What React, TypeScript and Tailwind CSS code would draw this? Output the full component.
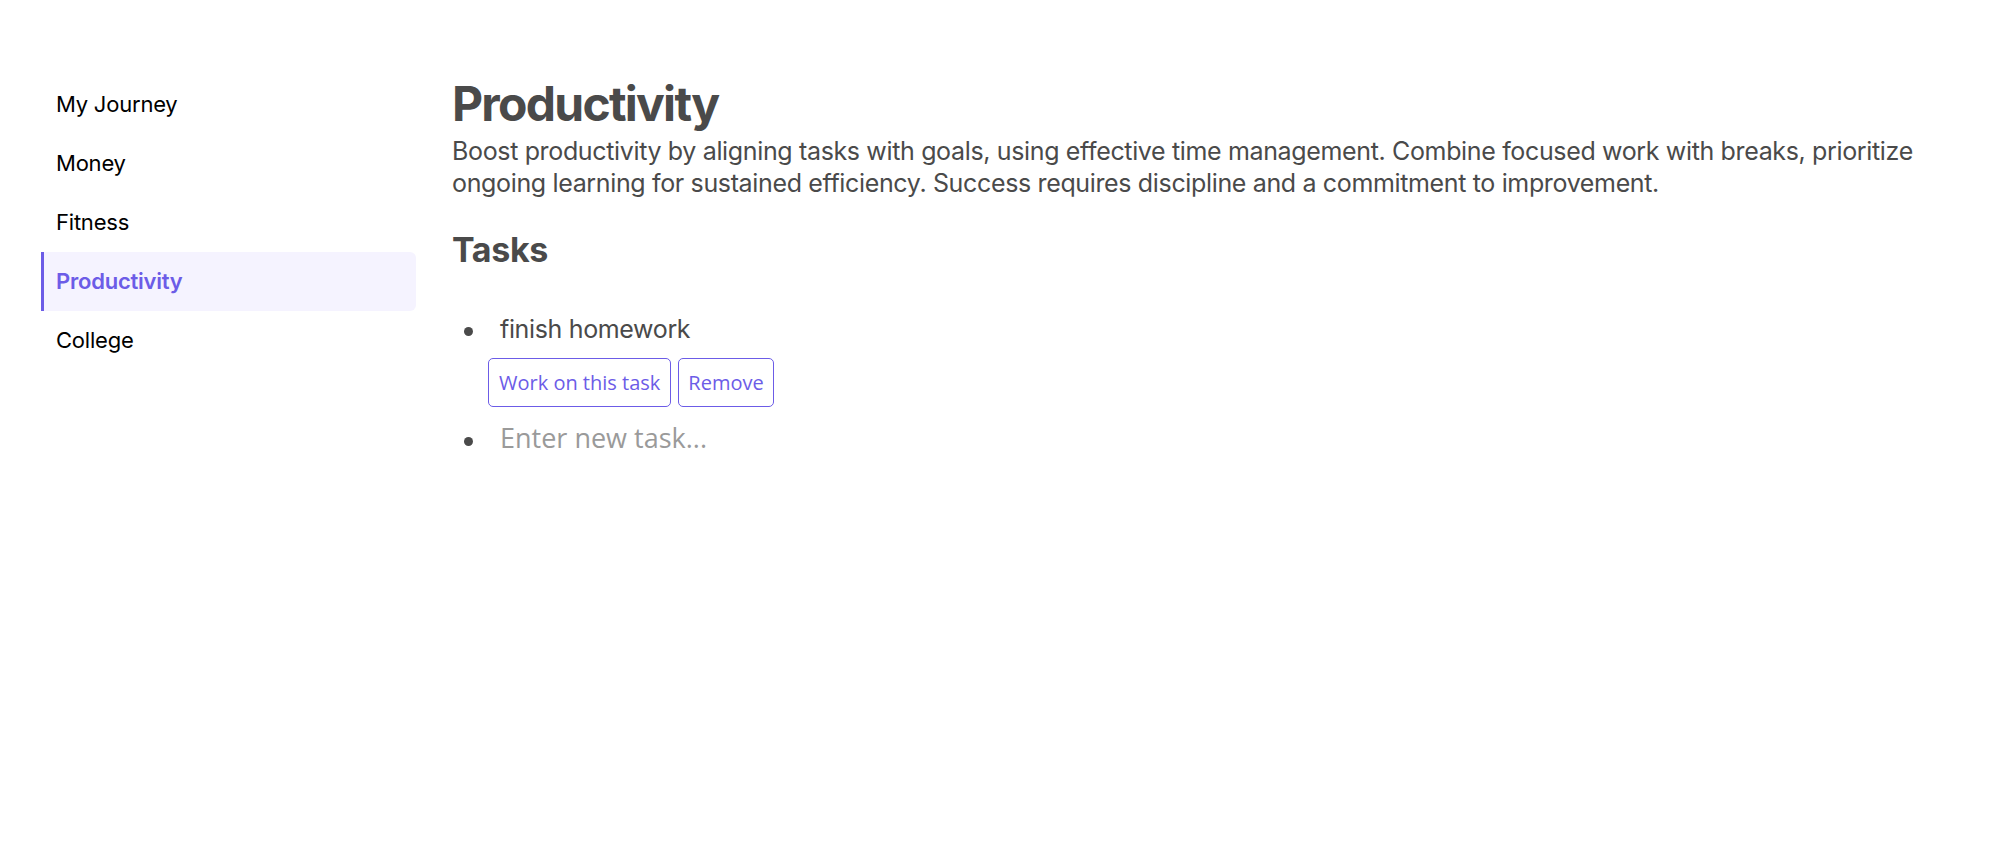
import { useState } from "react";

const sections = ["My Journey", "Money", "Fitness", "Productivity", "College"];

const description =
  "Boost productivity by aligning tasks with goals, using effective time management. Combine focused work with breaks, prioritize ongoing learning for sustained efficiency. Success requires discipline and a commitment to improvement.";

export default function App() {
  const [active, setActive] = useState("Productivity");
  const [tasks, setTasks] = useState<string[]>(["finish homework"]);
  const [draft, setDraft] = useState("");

  return (
    <div className="flex min-h-screen gap-[36px] bg-white px-[41px] pt-[75px] font-['Inter',sans-serif]">
      <nav className="w-[375px] shrink-0">
        {sections.map((name) => {
          const isActive = name === active;
          return (
            <button
              key={name}
              type="button"
              onClick={() => setActive(name)}
              className={
                isActive
                  ? "flex h-[59px] w-full items-center rounded-r-md border-l-[3px] border-[#6c5ce7] bg-[#f5f3ff] pl-[12px] text-left text-[22px] font-semibold tracking-[-0.01em] text-[#6c5ce7]"
                  : "flex h-[59px] w-full items-center border-l-[3px] border-transparent pl-[12px] text-left text-[22px] tracking-[-0.01em] text-black"
              }
            >
              {name}
            </button>
          );
        })}
      </nav>

      <main className="min-w-0 flex-1 text-[#4a4a4a]">
        <h1 className="text-[48px] leading-[1.2] font-bold tracking-[-0.036em]">{active}</h1>
        <p className="mt-[2px] text-[25px] leading-[32px] tracking-[-0.014em]">{description}</p>

        <h2 className="mt-[31px] text-[34px] leading-[1.2] font-bold tracking-[-0.01em]">Tasks</h2>

        <ul className="mt-[43px]">
          {tasks.map((task, i) => (
            <li key={i} className="flex items-start">
              <span className="mt-[14px] ml-[12px] h-[9px] w-[9px] shrink-0 rounded-full bg-[#4a4a4a]" />
              <div className="ml-[15px]">
                <div className="pl-[12px] text-[25px] leading-[32px] tracking-[-0.014em]">{task}</div>
                <div className="mt-[13px] flex gap-[7px] font-['Open_Sans',sans-serif]">
                  <button
                    type="button"
                    className="rounded-[5px] border border-[#6c5ce7] p-[10px] text-[20px] leading-[27px] text-[#6c5ce7]"
                  >
                    Work on this task
                  </button>
                  <button
                    type="button"
                    onClick={() => setTasks(tasks.filter((_, j) => j !== i))}
                    className="rounded-[5px] border border-[#6c5ce7] px-[9px] py-[10px] text-[20px] leading-[27px] text-[#6c5ce7]"
                  >
                    Remove
                  </button>
                </div>
              </div>
            </li>
          ))}
          <li className="mt-[12px] flex items-start">
            <span className="mt-[18px] ml-[12px] h-[9px] w-[9px] shrink-0 rounded-full bg-[#4a4a4a]" />
            <input
              value={draft}
              onChange={(e) => setDraft(e.target.value)}
              onKeyDown={(e) => {
                if (e.key === "Enter" && draft.trim()) {
                  setTasks([...tasks, draft.trim()]);
                  setDraft("");
                }
              }}
              placeholder="Enter new task..."
              className="ml-[27px] w-[600px] bg-transparent font-['Open_Sans',sans-serif] text-[27px] leading-[37px] text-[#4a4a4a] outline-none placeholder:text-[#9a9a9a]"
            />
          </li>
        </ul>
      </main>
    </div>
  );
}
